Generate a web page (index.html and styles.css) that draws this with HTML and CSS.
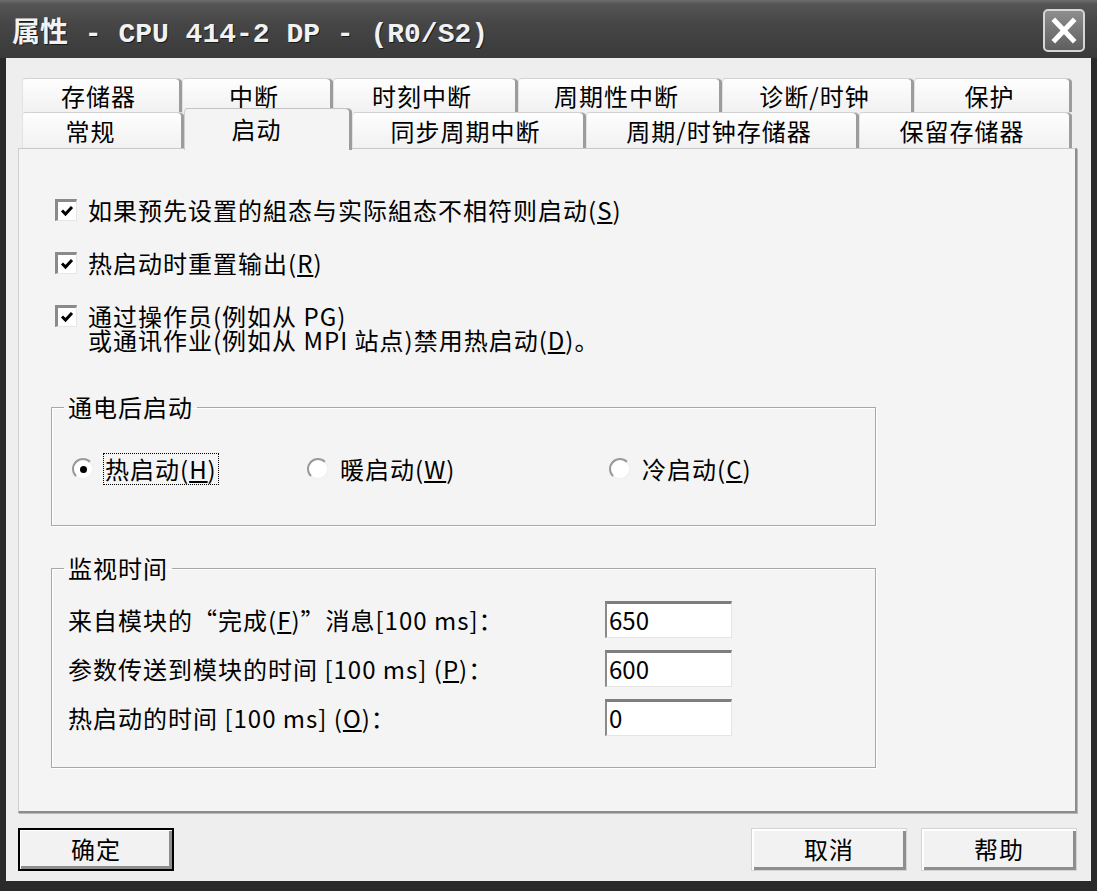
FILE: index.html
```html
<!DOCTYPE html>
<html lang="zh-CN">
<head>
    <meta charset="UTF-8">
    <title>属性 - CPU 414-2 DP - (R0/S2)</title>
    <link rel="stylesheet" href="styles.css">
</head>
<body>
    <div class="window">
        <div class="titlebar">
            <span class="title">属性 - CPU 414-2 DP - (R0/S2)</span>
            <span class="close-btn">
                <svg width="38" height="39" viewBox="0 0 38 39">
                    <path d="M10 10 L28 29 M28 10 L10 29" stroke="#fff" stroke-width="5" stroke-linecap="square"/>
                </svg>
            </span>
        </div>

        <div class="client">
            <div class="tabs">
                <div class="tab-row back">
                    <div class="tab">存储器</div>
                    <div class="tab">中断</div>
                    <div class="tab">时刻中断</div>
                    <div class="tab">周期性中断</div>
                    <div class="tab">诊断/时钟</div>
                    <div class="tab">保护</div>
                </div>
                <div class="tab-row front">
                    <div class="tab first">常规</div>
                    <div class="tab active">启动</div>
                    <div class="tab">同步周期中断</div>
                    <div class="tab">周期/时钟存储器</div>
                    <div class="tab">保留存储器</div>
                </div>
            </div>

            <div class="panel">
                <div class="checks">
                    <div class="check">
                        <span class="box"><svg width="18" height="18" viewBox="0 0 18 18"><path d="M4 8.5 L7.5 12 L14 5" fill="none" stroke="#000" stroke-width="3"/></svg></span>
                        <span class="check-text">如果预先设置的組态与实际組态不相符则启动(<u>S</u>)</span>
                    </div>
                    <div class="check">
                        <span class="box"><svg width="18" height="18" viewBox="0 0 18 18"><path d="M4 8.5 L7.5 12 L14 5" fill="none" stroke="#000" stroke-width="3"/></svg></span>
                        <span class="check-text">热启动时重置输出(<u>R</u>)</span>
                    </div>
                    <div class="check">
                        <span class="box"><svg width="18" height="18" viewBox="0 0 18 18"><path d="M4 8.5 L7.5 12 L14 5" fill="none" stroke="#000" stroke-width="3"/></svg></span>
                        <span class="check-text">通过操作员(例如从 PG)<br>或通讯作业(例如从 MPI 站点)禁用热启动(<u>D</u>)。</span>
                    </div>
                </div>

                <fieldset class="group power">
                    <legend>通电后启动</legend>
                    <div class="radios">
                        <div class="radio">
                            <span class="circle checked"></span>
                            <span class="radio-text focused">热启动(<u>H</u>)</span>
                        </div>
                        <div class="radio">
                            <span class="circle"></span>
                            <span class="radio-text">暖启动(<u>W</u>)</span>
                        </div>
                        <div class="radio">
                            <span class="circle"></span>
                            <span class="radio-text">冷启动(<u>C</u>)</span>
                        </div>
                    </div>
                </fieldset>

                <fieldset class="group monitor">
                    <legend>监视时间</legend>
                    <div class="fields">
                        <span class="field-label">来自模块的“完成(<u>F</u>)”消息[100 ms]：</span>
                        <span class="input">650</span>
                        <span class="field-label">参数传送到模块的时间 [100 ms] (<u>P</u>)：</span>
                        <span class="input">600</span>
                        <span class="field-label">热启动的时间 [100 ms] (<u>O</u>)：</span>
                        <span class="input">0</span>
                    </div>
                </fieldset>
            </div>

            <div class="footer">
                <button class="btn default">确定</button>
                <div class="btn-group">
                    <button class="btn">取消</button>
                    <button class="btn">帮助</button>
                </div>
            </div>
        </div>
    </div>
</body>
</html>
```

FILE: styles.css
```css
:root {
    --frame: #2a2a2a;
    --client-bg: #eeeeee;
    --panel-bg: #f4f4f4;
    --shade: #8c8c8c;
    --etch: #a8a8a8;
    --text: #000;
    --ui-font: "Noto Sans CJK SC", "Noto Sans", sans-serif;
}

body {
    margin: 0;
    background: var(--frame);
    font-family: var(--ui-font);
    color: var(--text);
}

.window {
    width: 1097px;
    height: 891px;
    display: flex;
    flex-direction: column;
    background: var(--frame);
}

/* title bar */
.titlebar {
    height: 58px;
    flex: none;
    display: flex;
    align-items: center;
    justify-content: space-between;
    padding: 2px 12px 0 12px;
    box-sizing: border-box;
    background: linear-gradient(#6e6e6e 0, #555 4px, #464646 40%, #3a3a3a 100%);
}

.title {
    font-family: "Liberation Mono", "Noto Sans CJK SC", monospace;
    font-weight: bold;
    font-size: 28px;
    color: #f2f2f2;
    text-shadow: 1px 1px 0 #1a1a1a;
    white-space: pre;
}

.close-btn {
    width: 42px;
    height: 43px;
    box-sizing: border-box;
    border: 2px solid #d6d6d6;
    border-radius: 5px;
    background: linear-gradient(#8e8e8e, #5e5e5e);
    display: flex;
    align-items: center;
    justify-content: center;
}

/* client area */
.client {
    flex: 1;
    margin: 0 6px 10px 6px;
    padding: 20px 14px 0 12px;
    background: var(--client-bg);
    display: flex;
    flex-direction: column;
}

.tabs {
    padding-left: 4px;
}

.tab-row {
    display: grid;
}

.tab-row.back {
    height: 34px;
    grid-template-columns: 160px 151px 185px 204px 192px 158px;
}

.tab-row.front {
    height: 36px;
    grid-template-columns: 162px 168px 234px 273px 213px;
}

.tab {
    display: flex;
    align-items: center;
    justify-content: center;
    padding-right: 8px;
    font-size: 24px;
    line-height: 24px;
    letter-spacing: 1px;
    background: linear-gradient(#fefefe, #f1f1f1);
    border-top: 1px solid #d2d2d2;
    border-left: 1px solid #e2e2e2;
    border-radius: 4px 4px 0 0;
    box-shadow: inset -3px 0 0 #9c9c9c;
}

.tab.first {
    padding-right: 26px;
}

.tab.active {
    position: relative;
    z-index: 2;
    margin: -4px 0 -2px 0;
    padding: 0 24px 2px 0;
    background: var(--panel-bg);
    border-top: 1px solid #c4c4c4;
    border-left: 1px solid #cfcfcf;
    box-shadow: inset -3px 0 0 #9c9c9c;
}

.panel {
    height: 665px;
    box-sizing: border-box;
    background: var(--panel-bg);
    border-top: 1px solid #c8c8c8;
    border-left: 1px solid #cfcfcf;
    border-right: 2px solid var(--shade);
    border-bottom: 2px solid var(--shade);
    box-shadow: 1px 1px 0 #b8b8b8;
    padding: 49px 0 0 32px;
    font-size: 24px;
    line-height: 24px;
    letter-spacing: 1px;
}

/* checkboxes */
.checks {
    display: flex;
    flex-direction: column;
    gap: 29px;
    margin-left: 4px;
}

.check {
    display: flex;
    align-items: flex-start;
    gap: 11px;
}

.box {
    width: 22px;
    height: 22px;
    flex: none;
    box-sizing: border-box;
    margin-top: 1px;
    background: #fff;
    border-style: solid;
    border-width: 3px 1px 1px 3px;
    border-color: #8a8a8a #e6e6e6 #e6e6e6 #8a8a8a;
    display: flex;
    align-items: center;
    justify-content: center;
}

/* group boxes */
.group {
    width: 825px;
    box-sizing: border-box;
    margin: 0;
    padding: 0;
    border: 1px solid var(--etch);
    box-shadow: inset 1px 1px 0 #fff, 1px 1px 0 #fff;
}

.group legend {
    margin-left: 12px;
    padding: 0 4px;
    line-height: 24px;
}

.power {
    margin-top: 43px;
    padding-bottom: 40px;
}

.radios {
    display: grid;
    grid-template-columns: 235px 302px auto;
    margin-top: 34px;
    padding-left: 20px;
}

.radio {
    display: flex;
    align-items: center;
    gap: 9px;
}

.circle {
    width: 22px;
    height: 22px;
    flex: none;
    box-sizing: border-box;
    border-radius: 50%;
    background: #fff;
    border: 2px solid;
    border-color: #9a9a9a #f2f2f2 #f2f2f2 #9a9a9a;
    display: flex;
    align-items: center;
    justify-content: center;
}

.circle.checked::after {
    content: "";
    width: 7px;
    height: 7px;
    border-radius: 50%;
    background: #000;
}

.radio-text {
    padding: 3px 1px;
    border: 1px dotted transparent;
}

.radio-text.focused {
    border-color: #000;
}

.monitor {
    margin-top: 30px;
    padding-bottom: 31px;
}

.fields {
    display: grid;
    grid-template-columns: 537px 127px;
    row-gap: 12px;
    align-items: center;
    margin-top: 21px;
    padding-left: 16px;
}

.input {
    height: 37px;
    box-sizing: border-box;
    background: #fff;
    border-style: solid;
    border-width: 3px 1px 1px 2px;
    border-color: #7e7e7e #e4e4e4 #e4e4e4 #8a8a8a;
    padding-left: 2px;
    line-height: 32px;
    letter-spacing: 0;
}

/* buttons */
.footer {
    display: flex;
    justify-content: space-between;
    margin-top: 15px;
}

.btn-group {
    display: flex;
    gap: 14px;
}

.btn {
    width: 156px;
    height: 43px;
    box-sizing: border-box;
    font-family: var(--ui-font);
    font-size: 24px;
    letter-spacing: 1px;
    color: #000;
    background: #f2f2f2;
    border: 1px solid #d4d4d4;
    box-shadow: inset 2px 2px 0 #fff, inset -3px -3px 0 #8e8e8e;
    padding: 0 0 2px 0;
}

.btn.default {
    border: 2px solid #000;
    box-shadow: inset 1px 1px 0 #fff, inset -3px -3px 0 #8e8e8e;
}
```
